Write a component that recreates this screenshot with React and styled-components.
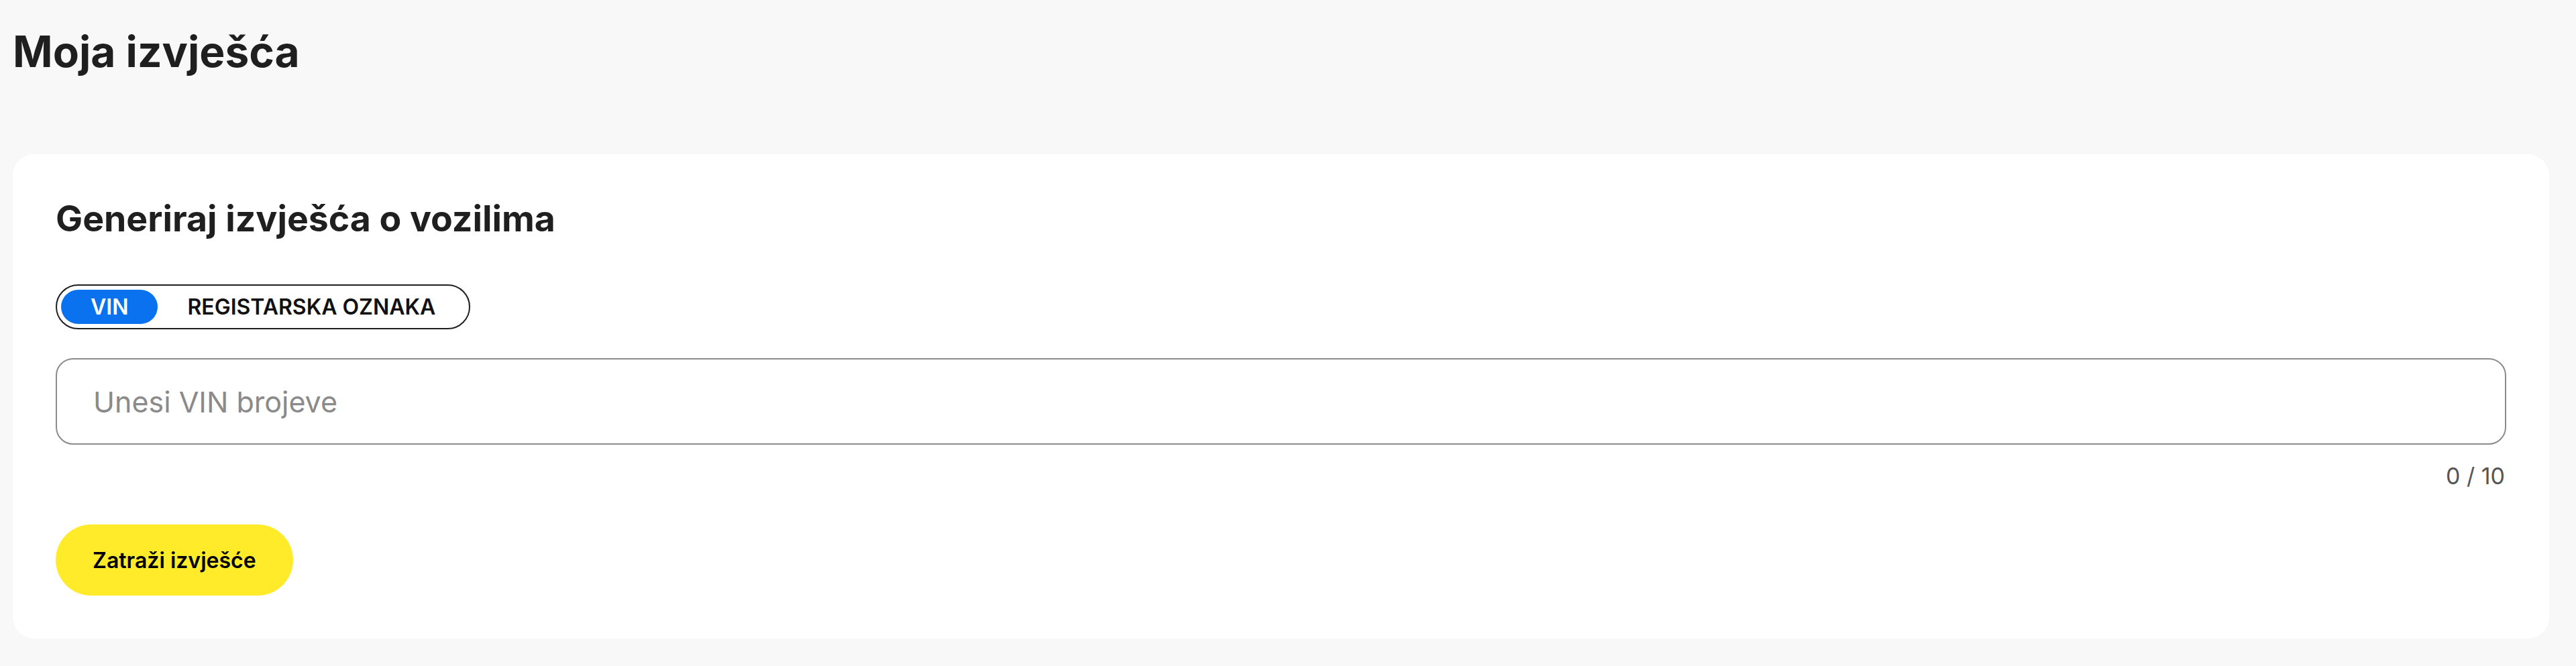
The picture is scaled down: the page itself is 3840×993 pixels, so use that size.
import React, { useState } from "react";
import styled, { createGlobalStyle } from "styled-components";

const Global = createGlobalStyle`
  html, body { margin: 0; padding: 0; background: #f8f8f8; }
  body { font-family: Inter, "Noto Sans", "Liberation Sans", sans-serif; color: #1f1f1f; }
  * { box-sizing: border-box; }
`;

const Page = styled.main`
  padding: 38px 40px 40px 19px;
`;

const PageTitle = styled.h1`
  margin: 0;
  font-size: 64px;
  font-weight: 700;
  line-height: 78px;
  color: #1f1f1f;
`;

const Card = styled.section`
  margin-top: 114px;
  background: #ffffff;
  border-radius: 32px;
  padding: 64px;
  display: flex;
  flex-direction: column;
  align-items: flex-start;
`;

const CardTitle = styled.h2`
  margin: 0;
  font-size: 53.5px;
  font-weight: 700;
  line-height: 63px;
  color: #1f1f1f;
`;

const Toggle = styled.div`
  margin-top: 67px;
  display: inline-flex;
  padding: 6px;
  border: 2px solid #1f1f1f;
  border-radius: 999px;
  background: #fff;
`;

const Segment = styled.button`
  border: 0;
  margin: 0;
  height: 51px;
  padding: 0 44px;
  border-radius: 999px;
  font-family: inherit;
  font-size: 32px;
  font-weight: 600;
  line-height: 51px;
  cursor: pointer;
  background: ${(p) => (p.$active ? "#0a72ee" : "transparent")};
  color: ${(p) => (p.$active ? "#ffffff" : "#111111")};
`;

const Field = styled.input`
  margin-top: 43px;
  width: 100%;
  height: 129px;
  border: 2px solid #8c8c8c;
  border-radius: 26px;
  padding: 0 54px;
  font-family: inherit;
  font-size: 43px;
  color: #1f1f1f;
  outline: none;
  background: #fff;
  &::placeholder { color: #8a8a8a; }
`;

const Counter = styled.div`
  margin-top: 26px;
  align-self: stretch;
  text-align: right;
  font-size: 34px;
  line-height: 41px;
  color: #555555;
  padding-right: 2px;
`;

const Submit = styled.button`
  margin-top: 52px;
  height: 106px;
  padding: 0 55px;
  border: 0;
  border-radius: 999px;
  background: #ffeb29;
  color: #000;
  font-family: inherit;
  font-size: 32px;
  font-weight: 600;
  cursor: pointer;
`;

export default function App() {
  const [mode, setMode] = useState("vin");
  const [value, setValue] = useState("");
  const count = value.split(/[\s,]+/).filter(Boolean).length;
  return (
    <>
      <Global />
      <Page>
        <PageTitle>Moja izvješća</PageTitle>
        <Card>
          <CardTitle>Generiraj izvješća o vozilima</CardTitle>
          <Toggle>
            <Segment $active={mode === "vin"} onClick={() => setMode("vin")}>VIN</Segment>
            <Segment $active={mode === "reg"} onClick={() => setMode("reg")}>REGISTARSKA OZNAKA</Segment>
          </Toggle>
          <Field
            placeholder={mode === "vin" ? "Unesi VIN brojeve" : "Unesi registarske oznake"}
            value={value}
            onChange={(e) => setValue(e.target.value)}
          />
          <Counter>{count} / 10</Counter>
          <Submit>Zatraži izvješće</Submit>
        </Card>
      </Page>
    </>
  );
}
